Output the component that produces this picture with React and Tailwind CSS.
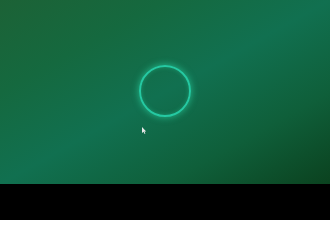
import React from "react";

const Cursor = () => (
  <svg width="5" height="7" viewBox="0 0 5 7" className="block">
    <path d="M0 0 L0 6 L1.5 4.8 L2.6 7 L3.4 6.6 L2.4 4.5 L4.2 4.5 Z" fill="#e8e8e8" />
  </svg>
);

export default function App() {
  return (
    <div className="w-[330px] h-[220px] bg-black flex flex-col">
      <div className="relative h-[184px] w-full bg-[linear-gradient(to_bottom_right,#1c6236_0%,#15693f_25%,#117050_50%,#0f5f3a_75%,#0b421f_100%)]">
        <div className="absolute left-[139px] top-[65px] w-[52px] h-[52px] rounded-full border-2 border-[#25c9a2] shadow-[0_0_6px_1px_rgba(45,220,170,0.55),inset_0_0_4px_rgba(45,220,170,0.35)]" />
        <div className="absolute left-[142px] top-[127px]">
          <Cursor />
        </div>
      </div>
    </div>
  );
}
